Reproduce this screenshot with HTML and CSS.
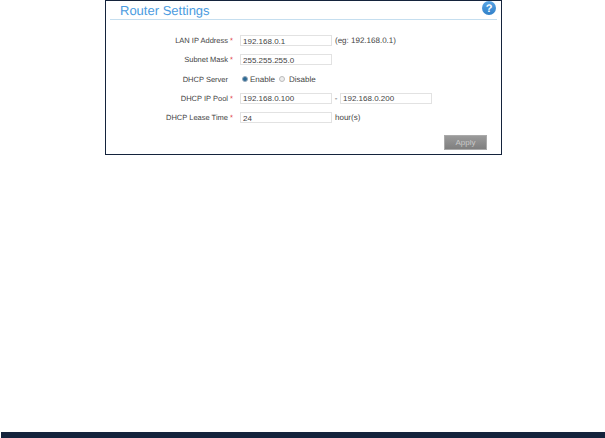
FILE: index.html
```html
<!DOCTYPE html>
<html lang="en">
<head>
    <meta charset="UTF-8">
    <title>Router Settings</title>
    <link rel="stylesheet" href="styles.css">
</head>
<body>
    <div class="panel">
        <div class="panel-head">
            <h1>Router Settings</h1>
            <svg class="help" width="14" height="14" viewBox="0 0 14 14">
                <defs>
                    <linearGradient id="help-fill" x1="0" y1="0" x2="0" y2="1">
                        <stop offset="0" stop-color="#5aa6e6"/>
                        <stop offset="1" stop-color="#2f7fc8"/>
                    </linearGradient>
                </defs>
                <circle cx="7" cy="7" r="7" fill="url(#help-fill)"/>
                <text x="7" y="11" text-anchor="middle" class="help-mark">?</text>
            </svg>
        </div>
        <div class="form">
            <div class="row">
                <label>LAN IP Address <span class="req">*</span></label>
                <input type="text" value="192.168.0.1">
                <span class="hint">(eg: 192.168.0.1)</span>
            </div>
            <div class="row">
                <label>Subnet Mask <span class="req">*</span></label>
                <input type="text" value="255.255.255.0">
            </div>
            <div class="row">
                <label class="no-req">DHCP Server</label>
                <span class="radio on"></span><span class="radio-text">Enable</span>
                <span class="radio"></span><span class="radio-text">Disable</span>
            </div>
            <div class="row">
                <label>DHCP IP Pool <span class="req">*</span></label>
                <input type="text" value="192.168.0.100">
                <span class="dash">-</span>
                <input type="text" value="192.168.0.200">
            </div>
            <div class="row">
                <label>DHCP Lease Time <span class="req">*</span></label>
                <input type="text" value="24">
                <span class="hint">hour(s)</span>
            </div>
        </div>
        <div class="actions">
            <button type="button">Apply</button>
        </div>
    </div>
    <div class="footer"></div>
</body>
</html>
```

FILE: styles.css
```css
html, body {
    margin: 0;
    padding: 0;
    background-color: #fff;
}
body {
    height: 438px;
    display: flex;
    flex-direction: column;
    overflow: hidden;
    font-family: "Liberation Sans", Arial, sans-serif;
    font-size: 8px;
    color: #444;
    text-rendering: geometricPrecision;
}
.panel {
    box-sizing: border-box;
    width: 397px;
    height: 155px;
    margin-left: 105px;
    padding: 0 4px;
    border: 1px solid #14233c;
}
.panel-head {
    display: flex;
    justify-content: space-between;
    align-items: flex-start;
    height: 18px;
    padding: 0 1px 0 10px;
    border-bottom: 1px solid #c5deef;
}
h1 {
    margin: 0;
    font-size: 13px;
    line-height: 19px;
    font-weight: normal;
    color: #4a9be0;
}
.help-mark {
    font-size: 11px;
    font-weight: bold;
    fill: #fff;
}
.form {
    padding-top: 15px;
}
.row {
    display: flex;
    align-items: center;
    height: 11px;
    margin-bottom: 8.3px;
}
label {
    width: 123px;
    margin-right: 7px;
    font-size: 7.5px;
    text-align: right;
    white-space: pre;
}
.req {
    color: #d33;
}
label.no-req {
    box-sizing: border-box;
    padding-right: 5px;
}
input {
    box-sizing: border-box;
    width: 92px;
    height: 11px;
    padding: 1px 2px 0;
    border: 1px solid #e2e2e2;
    font-family: inherit;
    font-size: 8px;
    color: #444;
    outline: none;
}
.hint {
    margin-left: 3px;
}
.dash {
    width: 8px;
    text-align: center;
}
.radio {
    box-sizing: border-box;
    width: 6px;
    height: 6px;
    margin-left: 2px;
    margin-right: 4px;
    border: 1px solid #bbb;
    border-radius: 50%;
    background-color: #eee;
}
.radio.on {
    margin-right: 2px;
    border-color: #9ab;
    background-color: #2c6a94;
}
.radio-text {
    margin-right: 2px;
}
.actions {
    display: flex;
    justify-content: flex-end;
    padding: 4px 10px 0 0;
}
button {
    width: 43px;
    height: 15px;
    padding: 0;
    border: 1px solid #aaa;
    background-image: linear-gradient(#9a9a9a, #7f7f7f);
    font-family: inherit;
    font-size: 8px;
    color: #c8c8c8;
}
.footer {
    height: 6px;
    margin-top: auto;
    margin-left: 1px;
    background-color: #14233c;
}
```
